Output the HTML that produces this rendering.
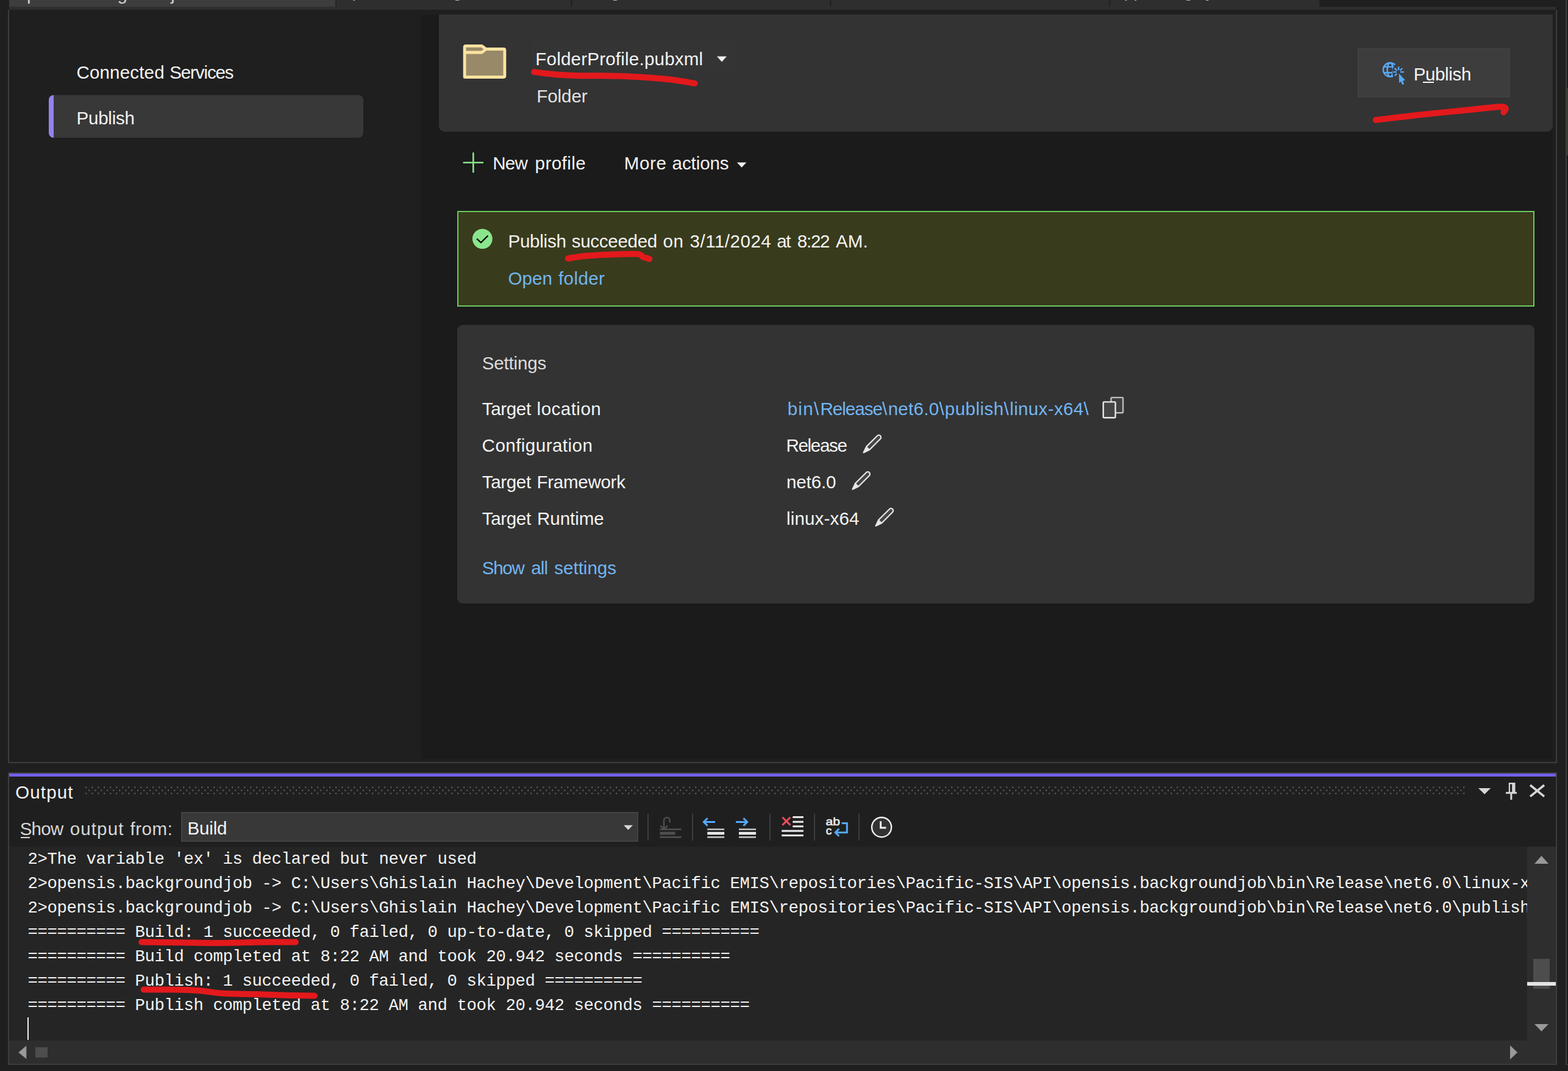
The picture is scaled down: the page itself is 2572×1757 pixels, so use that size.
<!DOCTYPE html>
<html lang="en">
<head>
<meta charset="utf-8">
<title>opensis.backgroundjob: Publish</title>
<style>
html,body{margin:0;padding:0;}
body{width:2572px;height:1757px;background:#1f1f1f;position:relative;overflow:hidden;
 font-family:"Liberation Sans",sans-serif;}
.b{position:absolute;}
.t{position:absolute;white-space:pre;line-height:1;font-family:"Liberation Sans",sans-serif;}
.m{position:absolute;white-space:pre;line-height:1;font-family:"Liberation Mono",monospace;color:#f4f4f4;}
svg{position:absolute;overflow:visible;}
u{text-decoration:none;}
</style>
</head>
<body>
<div class="b" style="left:15px;top:0px;width:537px;height:11px;background:#3d3d3d;"></div>
<div class="b" style="left:552px;top:0px;width:1612px;height:11px;background:#2e2e2e;"></div>
<div class="b" style="left:550px;top:0px;width:2px;height:11px;background:#242424;"></div>
<div class="b" style="left:936px;top:0px;width:3px;height:11px;background:#242424;"></div>
<div class="b" style="left:1361px;top:0px;width:3px;height:11px;background:#242424;"></div>
<div class="b" style="left:1819px;top:0px;width:3px;height:11px;background:#242424;"></div>
<div class="b" style="left:15px;top:11px;width:2537px;height:5px;background:#2e2e2e;"></div>
<div class="b" style="left:0;top:0;width:2165px;height:11px;overflow:hidden">
<span class="t" style="left:28.18px;top:-24.97px;font-size:29.5px;letter-spacing:-0.658px;color:#d0d0d0;">opensis.backgroundjob</span>
<span class="t" style="left:561.68px;top:-29.57px;font-size:29.5px;letter-spacing:-0.567px;color:#c0c0c0;">opensis.catalogdb</span>
<span class="t" style="left:958.48px;top:-29.57px;font-size:29.5px;letter-spacing:-1.004px;color:#c0c0c0;">Program.cs</span>
<span class="t" style="left:1385.44px;top:-29.57px;font-size:29.5px;letter-spacing:-0.554px;color:#c0c0c0;">JobSchedulerService.cs</span>
<span class="t" style="left:1827.66px;top:-29.57px;font-size:29.5px;letter-spacing:-0.650px;color:#c0c0c0;">appsettings.json</span>
</div>
<div class="b" style="left:13px;top:16px;width:2px;height:1236px;background:#3d3d3d;"></div>
<div class="b" style="left:2552px;top:16px;width:2px;height:1236px;background:#3d3d3d;"></div>
<div class="b" style="left:13px;top:1250px;width:2541px;height:2px;background:#3d3d3d;"></div>
<div class="b" style="left:2568px;top:0px;width:2px;height:1747px;background:#3d3d3d;"></div>
<div class="b" style="left:2568px;top:1745px;width:4px;height:2px;background:#3d3d3d;"></div>
<div class="b" style="left:2570px;top:145px;width:2px;height:110px;background:#4a3a1c;"></div>
<div class="b" style="left:2570px;top:255px;width:2px;height:1490px;background:#1c1c1c;"></div>
<div class="b" style="left:690px;top:24px;width:1857px;height:1221px;background:#1b1b1b;"></div>
<span class="b" style="left:0;top:0">
<span class="t" style="left:125.41px;top:103.93px;font-size:29.5px;letter-spacing:0.186px;color:#f4f4f4;">Connected</span>
 
<span class="t" style="left:278.27px;top:103.93px;font-size:29.5px;letter-spacing:-1.118px;color:#f4f4f4;">Services</span>
</span>
<div class="b" style="left:80px;top:156px;width:516px;height:70px;background:#383838;border-radius:8px;overflow:hidden;border-left:8px solid #9184ee;box-sizing:border-box;"></div>
<span class="t" style="left:125.48px;top:179.23px;font-size:29.5px;letter-spacing:-0.204px;color:#f4f4f4;">Publish</span>
<div class="b" style="left:720px;top:24px;width:1827px;height:192px;background:#333333;border-radius:0 0 9px 9px;"></div>
<div class="b" style="left:872px;top:67px;width:334px;height:54px;background:#343434;"></div>
<span class="t" style="left:878.28px;top:81.53px;font-size:29.5px;letter-spacing:0.229px;color:#f4f4f4;">FolderProfile.pubxml</span>
<span class="t" style="left:880.18px;top:142.63px;font-size:29.5px;letter-spacing:-0.022px;color:#e4e4e4;">Folder</span>
<div class="b" style="left:2227px;top:79px;width:250px;height:81px;background:#3d3d3d;border:2px solid #404040;box-sizing:border-box;"></div>
<span class="t" style="left:2318.68px;top:106.93px;font-size:29.5px;letter-spacing:-0.354px;color:#f4f4f4;">P<u>u</u>blish</span>
<div class="b" style="left:2334.4px;top:134.2px;width:17.90000000000009px;height:2.1000000000000227px;background:#f4f4f4;"></div>
<span class="b" style="left:0;top:0">
<span class="t" style="left:808.28px;top:253.03px;font-size:29.5px;letter-spacing:-0.792px;color:#f4f4f4;">New</span>
 
<span class="t" style="left:877.61px;top:253.03px;font-size:29.5px;letter-spacing:0.440px;color:#f4f4f4;">profile</span>
</span>
<span class="b" style="left:0;top:0">
<span class="t" style="left:1023.68px;top:253.03px;font-size:29.5px;letter-spacing:0.705px;color:#f4f4f4;">More</span>
 
<span class="t" style="left:1102.56px;top:253.03px;font-size:29.5px;letter-spacing:-0.078px;color:#f4f4f4;">actions</span>
</span>
<div class="b" style="left:750px;top:346px;width:1767px;height:157px;background:#393b1d;border:2px solid #6ccb5f;box-sizing:border-box;"></div>
<span class="b" style="left:0;top:0">
<span class="t" style="left:833.48px;top:380.63px;font-size:29.5px;letter-spacing:-0.237px;color:#f4f4f4;">Publish</span>
 
<span class="t" style="left:937.79px;top:380.63px;font-size:29.5px;letter-spacing:-0.287px;color:#f4f4f4;">succeeded</span>
 
<span class="t" style="left:1087.48px;top:380.63px;font-size:29.5px;letter-spacing:0.623px;color:#f4f4f4;">on</span>
 
<span class="t" style="left:1131.48px;top:380.63px;font-size:29.5px;letter-spacing:0.529px;color:#f4f4f4;">3/11/2024</span>
 
<span class="t" style="left:1274.28px;top:380.63px;font-size:29.5px;letter-spacing:-1.300px;color:#f4f4f4;">at</span>
 
<span class="t" style="left:1307.73px;top:380.63px;font-size:29.5px;letter-spacing:-1.221px;color:#f4f4f4;">8:22</span>
 
<span class="t" style="left:1370.96px;top:380.63px;font-size:29.5px;letter-spacing:0.089px;color:#f4f4f4;">AM.</span>
 
</span>
<span class="b" style="left:0;top:0">
<span class="t" style="left:833.51px;top:441.53px;font-size:29.5px;letter-spacing:0.111px;color:#72b6f3;">Open</span>
 
<span class="t" style="left:915.99px;top:441.53px;font-size:29.5px;letter-spacing:0.421px;color:#72b6f3;">folder</span>
</span>
<div class="b" style="left:750px;top:533px;width:1767px;height:457px;background:#333333;border-radius:9px;"></div>
<span class="t" style="left:790.77px;top:581.03px;font-size:29.5px;letter-spacing:-0.158px;color:#dcdcdc;">Settings</span>
<span class="b" style="left:0;top:0">
<span class="t" style="left:790.85px;top:655.93px;font-size:29.5px;letter-spacing:-0.348px;color:#f4f4f4;">Target</span>
 
<span class="t" style="left:880.62px;top:655.93px;font-size:29.5px;letter-spacing:0.487px;color:#f4f4f4;">location</span>
</span>
<span class="t" style="left:790.61px;top:716.03px;font-size:29.5px;letter-spacing:0.477px;color:#f4f4f4;">Configuration</span>
<span class="b" style="left:0;top:0">
<span class="t" style="left:790.85px;top:776.03px;font-size:29.5px;letter-spacing:-0.348px;color:#f4f4f4;">Target</span>
 
<span class="t" style="left:880.48px;top:776.03px;font-size:29.5px;letter-spacing:-0.255px;color:#f4f4f4;">Framework</span>
</span>
<span class="b" style="left:0;top:0">
<span class="t" style="left:790.85px;top:836.13px;font-size:29.5px;letter-spacing:-0.348px;color:#f4f4f4;">Target</span>
 
<span class="t" style="left:881.08px;top:836.13px;font-size:29.5px;letter-spacing:-0.054px;color:#f4f4f4;">Runtime</span>
</span>
<span class="b" style="left:0;top:0">
<span class="t" style="left:1291.67px;top:655.53px;font-size:29.5px;letter-spacing:1.300px;color:#72b6f3;">bin\</span>
<span class="t" style="left:1345.38px;top:655.53px;font-size:29.5px;letter-spacing:-0.960px;color:#72b6f3;">Release\</span>
<span class="t" style="left:1456.65px;top:655.53px;font-size:29.5px;letter-spacing:0.304px;color:#72b6f3;">net6.0\</span>
<span class="t" style="left:1549.81px;top:655.53px;font-size:29.5px;letter-spacing:0.472px;color:#72b6f3;">publish\</span>
<span class="t" style="left:1656.22px;top:655.53px;font-size:29.5px;letter-spacing:0.368px;color:#72b6f3;">linux-x64\</span>
</span>
<span class="t" style="left:1289.42px;top:715.73px;font-size:29.5px;letter-spacing:-1.300px;color:#f4f4f4;">Release</span>
<span class="t" style="left:1289.95px;top:776.03px;font-size:29.5px;letter-spacing:-0.085px;color:#f4f4f4;">net6.0</span>
<span class="t" style="left:1289.92px;top:835.83px;font-size:29.5px;letter-spacing:0.184px;color:#f4f4f4;">linux-x64</span>
<span class="b" style="left:0;top:0">
<span class="t" style="left:790.77px;top:916.73px;font-size:29.5px;letter-spacing:-1.252px;color:#72b6f3;">Show</span>
 
<span class="t" style="left:871.36px;top:916.73px;font-size:29.5px;letter-spacing:-0.907px;color:#72b6f3;">all</span>
 
<span class="t" style="left:909.19px;top:916.73px;font-size:29.5px;letter-spacing:0.029px;color:#72b6f3;">settings</span>
</span>
<div class="b" style="left:13px;top:1267px;width:2541px;height:480px;background:#1f1f1f;border:2px solid #3d3d3d;box-sizing:border-box;"></div>
<div class="b" style="left:15px;top:1269px;width:2537px;height:5px;background:#7160e8;"></div>
<span class="t" style="left:25.31px;top:1285.03px;font-size:29.5px;letter-spacing:1.107px;color:#f4f4f4;">Output</span>
<span class="b" style="left:0;top:0">
<span class="t" style="left:32.67px;top:1344.93px;font-size:29.5px;letter-spacing:-0.752px;color:#d6d6d6;"><u>S</u>how</span>
 
<span class="t" style="left:114.68px;top:1344.93px;font-size:29.5px;letter-spacing:1.141px;color:#d6d6d6;">output</span>
 
<span class="t" style="left:213.39px;top:1344.93px;font-size:29.5px;letter-spacing:0.574px;color:#d6d6d6;">from:</span>
</span>
<div class="b" style="left:34px;top:1373px;width:15px;height:2px;background:#d6d6d6;"></div>
<div class="b" style="left:297px;top:1332px;width:750px;height:49px;background:#383838;border:2px solid #424242;box-sizing:border-box;"></div>
<span class="t" style="left:307.48px;top:1344.13px;font-size:29.5px;letter-spacing:-0.147px;color:#f4f4f4;">Build</span>
<div class="b" style="left:1062px;top:1335px;width:2px;height:44px;background:#3d3d3d;"></div>
<div class="b" style="left:1135px;top:1335px;width:2px;height:44px;background:#3d3d3d;"></div>
<div class="b" style="left:1262px;top:1335px;width:2px;height:44px;background:#3d3d3d;"></div>
<div class="b" style="left:1335px;top:1335px;width:2px;height:44px;background:#3d3d3d;"></div>
<div class="b" style="left:1408px;top:1335px;width:2px;height:44px;background:#3d3d3d;"></div>
<div class="b" style="left:15px;top:1389px;width:2490px;height:318px;background:#252525;"></div>
<div class="b" style="left:2505px;top:1389px;width:47px;height:318px;background:#2e2e2e;"></div>
<div class="b" style="left:15px;top:1707px;width:2537px;height:38px;background:#2e2e2e;"></div>
<div class="b" style="left:2515px;top:1573px;width:27px;height:49px;background:#4d4d4d;"></div>
<div class="b" style="left:2505px;top:1611px;width:47px;height:6px;background:#e4e4e4;"></div>
<div class="b" style="left:58px;top:1718px;width:20px;height:17px;background:#4d4d4d;"></div>
<div class="b" style="left:45px;top:1669px;width:2px;height:37px;background:#f0f0f0;"></div>
<div class="b" style="left:15px;top:1389px;width:2490px;height:318px;overflow:hidden">
<span class="m" style="left:30.5px;top:7.07px;font-size:27.3px;letter-spacing:-0.382px">2&gt;The variable 'ex' is declared but never used</span>
<span class="m" style="left:30.5px;top:47.07px;font-size:27.3px;letter-spacing:-0.382px">2&gt;opensis.backgroundjob -&gt; C:\Users\Ghislain Hachey\Development\Pacific EMIS\repositories\Pacific-SIS\API\opensis.backgroundjob\bin\Release\net6.0\linux-x64\opensis.backgroundjob.dll</span>
<span class="m" style="left:30.5px;top:87.07px;font-size:27.3px;letter-spacing:-0.382px">2&gt;opensis.backgroundjob -&gt; C:\Users\Ghislain Hachey\Development\Pacific EMIS\repositories\Pacific-SIS\API\opensis.backgroundjob\bin\Release\net6.0\publish\linux-x64\</span>
<span class="m" style="left:30.5px;top:127.07px;font-size:27.3px;letter-spacing:-0.382px">========== Build: 1 succeeded, 0 failed, 0 up-to-date, 0 skipped ==========</span>
<span class="m" style="left:30.5px;top:167.07px;font-size:27.3px;letter-spacing:-0.382px">========== Build completed at 8:22 AM and took 20.942 seconds ==========</span>
<span class="m" style="left:30.5px;top:207.07px;font-size:27.3px;letter-spacing:-0.382px">========== Publish: 1 succeeded, 0 failed, 0 skipped ==========</span>
<span class="m" style="left:30.5px;top:247.07px;font-size:27.3px;letter-spacing:-0.382px">========== Publish completed at 8:22 AM and took 20.942 seconds ==========</span>
</div>
<svg width="2572" height="1757" viewBox="0 0 2572 1757" style="left:0;top:0"><g fill="#988a68" stroke="#ffe3a1" stroke-width="4.8" stroke-linejoin="round" stroke-linecap="round"><path d="M762.1,126.5 V77.4 Q762.1,75.4 764.1,75.4 H790.5 L797,80.5 H825.9 Q827.9,80.5 827.9,82.5 V124.5 Q827.9,126.5 825.9,126.5 H764.1 Q762.1,126.5 762.1,124.5 Z"/><path d="M762.1,86 H790.5 L797,80.5" fill="none"/></g><path d="M1176,92.5 H1192 L1184,101.5 Z" fill="#f0f0f0"/><path d="M1208.8,266.5 H1224.4 L1216.6,274.8 Z" fill="#f0f0f0"/><g stroke="#55aaff" fill="none" stroke-width="2.4"><clipPath id="gc"><path d="M2260,95 H2296 L2290,104 L2284.5,112 L2284,121 L2286,127.5 L2284,132 H2260 Z"/></clipPath><g clip-path="url(#gc)"><circle cx="2280.3" cy="114.4" r="11.4"/><ellipse cx="2280.3" cy="114.4" rx="4.8" ry="11.4"/><path d="M2269,109.6 H2292 M2269,119.3 H2292"/></g><path d="M2294.1,109.3 V115 M2285.2,118.1 H2290.9 M2297,118.1 H2303 M2287.6,111.9 L2291.5,115.6 M2300.2,112 L2296.6,115.6 M2287.8,124.2 L2291.4,120.8"/><path d="M2294.7,120.6 L2304.9,131.6 L2300.9,132.7 L2303.2,138 L2300.3,139.1 L2298.1,133.8 L2295,135.7 Z" fill="#55aaff" stroke="none"/></g><path d="M759.6,266.7 H793 M776.3,250.2 V283.3" stroke="#8be58e" stroke-width="2.6" fill="none"/><circle cx="791.3" cy="391.8" r="16.4" fill="#8be58e"/><path d="M782.6,392.2 L788.9,398 L799.8,387.2" stroke="#000" stroke-width="2.3" fill="none" stroke-linecap="round" stroke-linejoin="round"/><rect x="1822.5" y="652.1" width="19.6" height="25.1" rx="1.5" fill="#414141" stroke="#bdbdbd" stroke-width="2.4"/><rect x="1809.7" y="659.4" width="19.9" height="25.8" rx="1.5" fill="#454545" stroke="#e8e8e8" stroke-width="2.4"/><g transform="translate(1441.5,717.5) rotate(135)"><path d="M0,-3.6 H25 L35.3,0 L25,3.6 H0 A3.6,3.6 0 0 1 0,-3.6 Z" fill="#464646" stroke="#e6e6e6" stroke-width="2.2" stroke-linejoin="round"/><path d="M25,-3.6 L35.3,0 L25,3.6 Z" fill="#e6e6e6" stroke="#e6e6e6" stroke-width="1" stroke-linejoin="round"/></g><g transform="translate(1423.4,777.7) rotate(135)"><path d="M0,-3.6 H25 L35.3,0 L25,3.6 H0 A3.6,3.6 0 0 1 0,-3.6 Z" fill="#464646" stroke="#e6e6e6" stroke-width="2.2" stroke-linejoin="round"/><path d="M25,-3.6 L35.3,0 L25,3.6 Z" fill="#e6e6e6" stroke="#e6e6e6" stroke-width="1" stroke-linejoin="round"/></g><g transform="translate(1461.5,837.7) rotate(135)"><path d="M0,-3.6 H25 L35.3,0 L25,3.6 H0 A3.6,3.6 0 0 1 0,-3.6 Z" fill="#464646" stroke="#e6e6e6" stroke-width="2.2" stroke-linejoin="round"/><path d="M25,-3.6 L35.3,0 L25,3.6 Z" fill="#e6e6e6" stroke="#e6e6e6" stroke-width="1" stroke-linejoin="round"/></g><defs><pattern id="grip" x="140" y="1290" width="10" height="10" patternUnits="userSpaceOnUse"><rect x="0" y="0.5" width="2.4" height="2.4" fill="#555555"/><rect x="5" y="5.5" width="2.4" height="2.4" fill="#555555"/></pattern></defs><rect x="140" y="1290" width="2263" height="13" fill="url(#grip)"/><path d="M2425,1293 H2445.2 L2435.1,1303 Z" fill="#d6d6d6"/><g fill="#d6d6d6"><path d="M2474.8,1284 H2485.5 V1299.2 H2488 V1302.3 H2480.4 V1312 H2477.3 V1302.3 H2470 V1299.2 H2474.8 Z M2477,1286.6 V1299.2 H2480.2 V1286.6 Z" fill-rule="evenodd"/></g><path d="M2510,1288 L2533,1306.6 M2533,1288 L2510,1306.6" stroke="#d6d6d6" stroke-width="3.6" fill="none"/><path d="M1023,1353.7 H1038 L1030.5,1361.6 Z" fill="#d6d6d6"/><g fill="#4f4f4f"><rect x="1082.4" y="1359.3" width="35.2" height="2.6"/><rect x="1082.4" y="1364.6" width="25.2" height="4.9"/><rect x="1082.4" y="1372" width="35.2" height="2.7"/></g><path d="M1083.2,1354.6 L1089,1360.4 L1094.8,1354.6 M1089,1360 V1346 A4.85,4.85 0 0 1 1098.7,1346 V1349.4" stroke="#4f4f4f" stroke-width="2.4" fill="none"/><g><rect x="1160.2" y="1359.3" width="27.899999999999864" height="2.6" fill="#c0c0c0"/><rect x="1160.2" y="1363.4" width="27.899999999999864" height="7.3" fill="#000"/><rect x="1160.2" y="1364.6" width="27.899999999999864" height="4.9" fill="#e6e6e6"/><rect x="1160.2" y="1372" width="27.899999999999864" height="2.7" fill="#c0c0c0"/></g><path d="M1173,1348.4 H1154.5 M1160.6,1342.2 L1154.4,1348.4 L1160.6,1354.6" stroke="#55aaff" stroke-width="3" fill="none"/><g><rect x="1212" y="1359.3" width="28" height="2.6" fill="#c0c0c0"/><rect x="1212" y="1363.4" width="28" height="7.3" fill="#000"/><rect x="1212" y="1364.6" width="28" height="4.9" fill="#e6e6e6"/><rect x="1212" y="1372" width="28" height="2.7" fill="#c0c0c0"/></g><path d="M1207.1,1348.4 H1225.6 M1219.5,1342.2 L1225.7,1348.4 L1219.5,1354.6" stroke="#55aaff" stroke-width="3" fill="none"/><path d="M1283.4,1340.7 L1296.4,1353.6 M1296.4,1340.7 L1283.4,1353.6" stroke="#f14c5c" stroke-width="3" fill="none"/><g fill="#e8e8e8"><rect x="1300.3" y="1339" width="17.6" height="3.1"/><rect x="1300.3" y="1346.7" width="17.6" height="3.1"/><rect x="1300.3" y="1354.2" width="17.6" height="3"/><rect x="1282.2" y="1361.6" width="35.7" height="3.1"/><rect x="1282.2" y="1369" width="35.7" height="3.1"/></g><text x="1354.6" y="1354.4" font-family="Liberation Sans, sans-serif" font-weight="normal" stroke="#e8e8e8" stroke-width="0.7" font-size="19" fill="#e8e8e8" textLength="23.4" lengthAdjust="spacingAndGlyphs">ab</text><text x="1354.8" y="1369.3" font-family="Liberation Sans, sans-serif" font-weight="normal" stroke="#e8e8e8" stroke-width="0.7" font-size="19" fill="#e8e8e8">c</text><path d="M1380.7,1350.6 H1389.3 V1365.7 H1370 M1376.3,1359.6 L1370.2,1365.7 L1376.3,1371.8" stroke="#55aaff" stroke-width="3" fill="none"/><circle cx="1446.1" cy="1357.1" r="16.1" fill="#333333" stroke="#f0f0f0" stroke-width="2.4"/><path d="M1444.6,1347.2 V1358.1 H1453.4" stroke="#f0f0f0" stroke-width="3" fill="none"/><g fill="#999999"><path d="M2517,1417 L2528.5,1404 L2540,1417 Z"/><path d="M2517,1680 H2540 L2528.5,1692 Z"/><path d="M43.3,1715.5 V1737.3 L30.3,1726.4 Z"/><path d="M2477,1715 V1738 L2489,1726.5 Z"/></g><g stroke="#e3191c" fill="none" stroke-linecap="round" stroke-linejoin="round" stroke-width="10"><path d="M876.1,118.1 C882.0,118.8 899.2,121.2 911.6,122.2 C924.0,123.2 937.5,124.0 950.4,124.3 C963.3,124.6 976.2,124.0 989.1,124.2 C1002.0,124.4 1014.9,124.6 1027.8,125.2 C1040.7,125.8 1053.6,126.6 1066.5,127.6 C1079.4,128.6 1093.1,129.8 1105.3,131.3 C1117.5,132.8 1133.8,135.9 1139.5,136.8"/><path d="M2256.7,196.9 C2264.7,195.9 2289.3,192.9 2304.5,191.2 C2319.7,189.4 2331.4,188.1 2347.6,186.4 C2363.8,184.7 2383.5,182.8 2401.4,181.0 C2419.3,179.2 2444.3,176.5 2455.1,175.6 C2465.9,174.7 2463.6,174.8 2466.0,175.3 C2468.4,175.8 2469.7,177.0 2469.8,178.5 C2469.9,180.0 2467.0,183.2 2466.4,184.2"/><path d="M931.7,424.0 C936.2,423.3 947.3,421.0 958.4,420.0 C969.5,419.0 984.0,418.4 998.4,417.8 C1012.8,417.2 1035.8,416.1 1045.1,416.7 C1054.4,417.3 1051.1,420.1 1054.4,421.4 C1057.7,422.7 1063.3,424.1 1065.1,424.7"/><path d="M232.2,1545.5 C243.1,1545.6 277.5,1546.0 297.6,1546.2 C317.7,1546.5 332.1,1547.1 352.7,1547.0 C373.3,1546.9 399.5,1546.0 421.5,1545.8 C443.5,1545.5 474.3,1545.5 484.9,1545.5"/><path d="M235.7,1623.5 C243.7,1623.5 268.9,1623.3 283.8,1623.5 C298.7,1623.7 311.4,1623.9 325.2,1624.9 C339.0,1625.9 350.4,1628.7 366.5,1629.7 C382.6,1630.7 403.1,1630.6 421.5,1631.1 C439.9,1631.6 460.9,1632.5 476.6,1632.9 C492.3,1633.3 509.3,1633.5 515.9,1633.6"/></g></svg>
</body>
</html>
